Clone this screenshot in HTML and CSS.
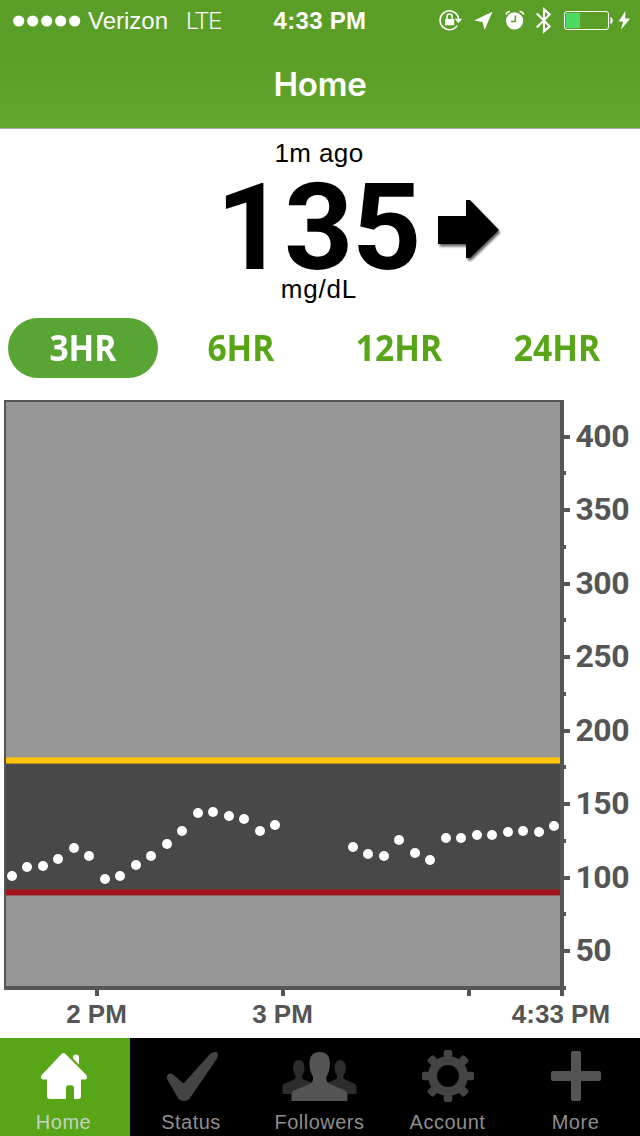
FILE: index.html
```html
<!DOCTYPE html>
<html lang="en">
<head>
<meta charset="utf-8">
<title>Home</title>
<link rel="stylesheet" href="styles.css">
</head>
<body>
<div class="screen">
  <header class="header">
    <div class="status">
      <div class="status-left">
        <svg class="signal" width="68" height="12" viewBox="0 0 68 12"><circle cx="5.700" cy="6" r="5.600"/><circle cx="19.700" cy="6" r="5.600"/><circle cx="33.700" cy="6" r="5.600"/><circle cx="47.700" cy="6" r="5.600"/><circle cx="61.700" cy="6" r="5.600"/></svg>
        <span class="carrier">Verizon</span>
        <span class="network">LTE</span>
      </div>
      <div class="clock">4:33 PM</div>
      <svg class="status-icons" width="210" height="42" viewBox="430 0 210 42">
        <path class="line" d="M457.6 15.6A9.4 9.4 0 1 0 457.2 25.6M457.6 15.6Q458.6 17.4 458.6 20"/>
        <path d="M454.8 18.8h7.3l-3.7 4.4zM445 19h9.2v6.2H445z"/>
        <path class="line" d="M447 19v-2.3a2.6 2.6 0 0 1 5.2 0V19"/>
        <path d="M492.400 11.800L484.600 30 482.600 22 474 20.400z"/>
        <circle cx="514.6" cy="20.8" r="8.6"/>
        <path class="line" d="M506 14.6a4 4 0 0 1 4-3M519.6 11.6a4 4 0 0 1 4 3"/>
        <path class="cut" d="M515.4 15.4v6.2h-4.4"/>
        <path class="blue" d="M536.800 13.400l12.900 13-5.700 5V9.400l5.700 5-12.900 13"/>
        <rect class="line thin" x="564.5" y="11.5" width="44" height="18" rx="2.5"/>
        <rect class="charge" x="566" y="13" width="14" height="15"/>
        <path d="M610.4 17q2.4.8 2.4 3.6t-2.4 3.6zM625.4 11L618.6 21.4h4.6L621 29.6 630.2 18.6h-5z"/>
      </svg>
    </div>
    <h1 class="title">Home</h1>
  </header>

  <main class="reading">
    <div class="age">1m ago</div>
    <div class="value-row">
      <span></span>
      <span class="value">135</span>
      <svg class="trend" width="70" height="70" viewBox="434 196 70 70"><path class="trend-shadow" d="M438 216h28v-16h4l29 30-29 28h-4v-14h-28z"/><path d="M438 216h28v-16h4l29 30-29 28h-4v-14h-28z"/></svg>
    </div>
    <div class="unit">mg/dL</div>
  </main>

  <nav class="ranges">
    <button class="range active"><span>3HR</span></button>
    <button class="range"><span>6HR</span></button>
    <button class="range"><span>12HR</span></button>
    <button class="range"><span>24HR</span></button>
  </nav>

  <svg class="chart" width="640" height="648" viewBox="0 390 640 648">
    <rect class="plot" x="5" y="401" width="557" height="587"/>
    <rect class="target" x="6" y="760" width="554" height="132"/>
    <rect class="high" x="6" y="757.4" width="554" height="6.2"/>
    <rect class="low" x="6" y="889.4" width="554" height="6"/>
    <g class="axis">
      <path d="M4 400h560v2H4zM4 400h2v590H4zM560 400h4v596h-4zM4 986h562v4H4z"/>
      <path d="M95 990h4v6h-4zM281 990h4v6h-4zM467 990h4v6h-4z"/>
      <path d="M564 435h6v4h-6zM564 508h6v4h-6zM564 582h6v4h-6zM564 655h6v4h-6zM564 729h6v4h-6zM564 802h6v4h-6zM564 876h6v4h-6zM564 949h6v4h-6z"/>
      <path d="M564 471h2v4h-2zM564 545h2v4h-2zM564 618h2v4h-2zM564 692h2v4h-2zM564 765h2v4h-2zM564 839h2v4h-2zM564 912h2v4h-2z"/>
    </g>
    <g class="y-label">
      <text x="575.5" y="447">400</text><text x="575.5" y="520">350</text><text x="575.5" y="594">300</text><text x="575.5" y="667">250</text><text x="575.5" y="741">200</text><text x="575.5" y="814">150</text><text x="575.5" y="888">100</text><text x="575.5" y="961">50</text>
    </g>
    <g class="x-label">
      <text x="96.5" y="1023">2 PM</text><text x="282.5" y="1023">3 PM</text><text x="561" y="1023">4:33 PM</text>
    </g>
    <g class="points">
      <circle cx="12" cy="876" r="5"/><circle cx="27" cy="867" r="5"/><circle cx="43" cy="866" r="5"/><circle cx="58" cy="859" r="5"/><circle cx="74" cy="848" r="5"/><circle cx="89" cy="856" r="5"/><circle cx="105" cy="879" r="5"/><circle cx="120" cy="876" r="5"/><circle cx="136" cy="865" r="5"/><circle cx="151" cy="856" r="5"/><circle cx="167" cy="844" r="5"/><circle cx="182" cy="831" r="5"/><circle cx="198" cy="813" r="5"/><circle cx="213" cy="812" r="5"/><circle cx="229" cy="816" r="5"/><circle cx="244" cy="819" r="5"/><circle cx="260" cy="831" r="5"/><circle cx="275" cy="825" r="5"/>
      <circle cx="353" cy="847" r="5"/><circle cx="368" cy="854" r="5"/><circle cx="384" cy="856" r="5"/><circle cx="399" cy="840" r="5"/><circle cx="415" cy="853" r="5"/><circle cx="430" cy="860" r="5"/><circle cx="446" cy="838" r="5"/><circle cx="461" cy="838" r="5"/><circle cx="477" cy="835" r="5"/><circle cx="492" cy="835" r="5"/><circle cx="508" cy="832" r="5"/><circle cx="523" cy="831" r="5"/><circle cx="539" cy="832" r="5"/><circle cx="554" cy="826" r="5"/>
    </g>
  </svg>

  <nav class="tabs">
    <a class="tab selected"><svg width="60" height="60" viewBox="34 1046 60 60"><path fill="#fff" d="M61.5 1054q2-2 4 0L86.300 1075q1.200 1.500.7 3t-2 1.400h-4V1096q0 3-3 3h-4v-11q0-2.800-2.800-2.800h-2.400q-2.800 0-2.800 2.800v11H50q-3 0-3-3v-16.600h-4q-1.500 0-2-1.400t.7-3z"/><path fill="#fff" d="M73 1057q0-2.500 3-2.500t3 2.500v7.500l-6-6z"/></svg><span>Home</span></a>
    <a class="tab"><svg width="60" height="60" viewBox="162 1046 60 60"><path fill="#444" d="M167 1079v-3q1.500-3.500 5.500-2l11 9.500L210 1054q4-3 7.500-1.500 1 2.500-.5 6L190 1098q-2 3-6 3t-6-3z"/></svg><span>Status</span></a>
    <a class="tab"><svg width="80" height="60" viewBox="279.500 1046 80 60"><g fill="#2d2d2d"><path d="M282 1094v-7.500q0-2 2-2.700l10-4.500q1.700-1 1.200-3.300-3-4-2.700-8.500.5-7.500 5.800-7.500t5.800 7.500q.3 4.500-2.700 8.500-.5 2.300 1.200 3.300l12 5V1094z"/><path d="M356 1094v-7.500q0-2-2-2.700l-10-4.500q-1.700-1-1.200-3.300 3-4 2.700-8.500-.5-7.500-5.800-7.500t-5.800 7.500q-.3 4.500 2.700 8.500.5 2.300-1.200 3.300l-12 5V1094z"/></g><path fill="#545454" d="M291 1101v-6.500q0-2.500 2.500-4l15.500-6.500q3.500-1.800 3.500-5v-2.500q-3.500-5-3.500-13 0-11.500 10.200-11.500t10.200 11.500q0 8-3.500 13v2.500q0 3.200 3.500 5l15 6.500q2.500 1.500 2.500 4v6.500z"/></svg><span>Followers</span></a>
    <a class="tab"><svg width="60" height="60" viewBox="418 1046 60 60"><g fill="#444" transform="translate(448 1076)"><g id="teeth"><rect x="-4.300" y="-26" width="8.600" height="52" rx="2"/><rect x="-26" y="-4.300" width="52" height="8.600" rx="2"/></g><use href="#teeth" transform="rotate(45)"/><circle r="20"/><circle r="11" fill="#000"/></g></svg><span>Account</span></a>
    <a class="tab"><svg width="60" height="60" viewBox="546 1046 60 60"><path fill="#545454" d="M573 1051h6q2 0 2 2v18h18q2 0 2 2v6q0 2-2 2h-18v18q0 2-2 2h-6q-2 0-2-2v-18h-18q-2 0-2-2v-6q0-2 2-2h18v-18q0-2 2-2z"/></svg><span>More</span></a>
  </nav>
</div>
</body>
</html>
```

FILE: styles.css
```css
* { box-sizing: border-box; }
body { margin: 0; background: #fff; font-family: "Liberation Sans", Arial, sans-serif; }
.screen { width: 640px; height: 1136px; display: flex; flex-direction: column; overflow: hidden; }

.header { height: 129px; flex: none; color: #fff; background: linear-gradient(#5b9e27 0, #5b9e27 45%, #64a82f 100%); border-bottom: 1px solid #a9aca6; }
.status { height: 42px; display: grid; grid-template-columns: 230px 180px 230px; align-items: center; }
.status-left { display: flex; align-items: center; padding-left: 13px; white-space: nowrap; }
.signal { fill: #fff; flex: none; }
.carrier { font-size: 24px; margin-left: 7px; letter-spacing: 0; }
.network { font-family: Roboto, sans-serif; font-weight: 300; font-size: 24px; margin-left: 18px; letter-spacing: -0.8px; }
.clock { font-size: 24px; font-weight: 700; text-align: center; letter-spacing: 0.3px; }
.status-icons { justify-self: end; fill: #fff; }
.line { fill: none; stroke: #fff; stroke-width: 1.5; }
.thin { stroke-width: 1; }
.cut { fill: none; stroke: #5b9e27; stroke-width: 1.5; }
.blue { fill: none; stroke: #fff; stroke-width: 2.1; }
.charge { fill: #4cd964; }
.title { margin: 0; font-family: Inter, sans-serif; font-size: 33px; line-height: 84px; text-align: center; font-weight: 600; letter-spacing: -0.2px; }

.reading { height: 181px; flex: none; padding-top: 8px; color: #000; text-align: center; }
.age { font-size: 26px; line-height: 32px; letter-spacing: 0.4px; padding-right: 2px; }
.value-row { height: 104px; display: grid; grid-template-columns: 206px 228px 206px; align-items: center; }
.value { font-family: Roboto, sans-serif; font-size: 121px; line-height: 104px; font-weight: 700; letter-spacing: -1.5px; padding: 7px 4px 0 0; }
.trend { margin-top: 13px; overflow: visible; }
.trend-shadow { fill: #000; opacity: 0.6; filter: blur(1px); transform: translate(1.5px, 2.5px); }
.unit { font-size: 26px; line-height: 32px; letter-spacing: 0.8px; padding-right: 2px; }

.ranges { height: 80px; flex: none; display: flex; gap: 8px; padding: 8px 8px 12px; }
.range { width: 150px; height: 60px; border: 0; border-radius: 30px; padding: 0; background: none; color: #58a618; font-family: "Open Sans", sans-serif; font-weight: 700; font-size: 35px; line-height: 60px; }
.range span { display: inline-block; margin-right: 1px; transform: scaleX(0.96); }
.range.active { background: #58a533; color: #fff; }

.chart { display: block; flex: none; }
.plot { fill: #969696; }
.target { fill: #484848; }
.high { fill: #ffc300; }
.low { fill: #a1131c; }
.axis { fill: #555; }
.y-label { fill: #555; font-family: Roboto, sans-serif; font-size: 32px; font-weight: 700; letter-spacing: -0.5px; }
.x-label { fill: #555; font-size: 26px; font-weight: 700; text-anchor: middle; }
.points { fill: #fff; }

.tabs { height: 98px; flex: none; display: flex; background: #000; }
.tab { width: 128px; display: flex; flex-direction: column; align-items: center; padding-top: 8px; color: #8e8e8e; font-size: 20px; line-height: 24px; letter-spacing: 0.5px; }
.tab span { margin-top: 4px; padding-right: 1px; }
.tab.selected { width: 130px; padding-right: 2px; background: #58a618; color: #c8d0c4; }
.tab:nth-child(2) { width: 126px; padding-right: 2px; }
.tab:nth-child(2) span { padding-right: 2px; }
```
